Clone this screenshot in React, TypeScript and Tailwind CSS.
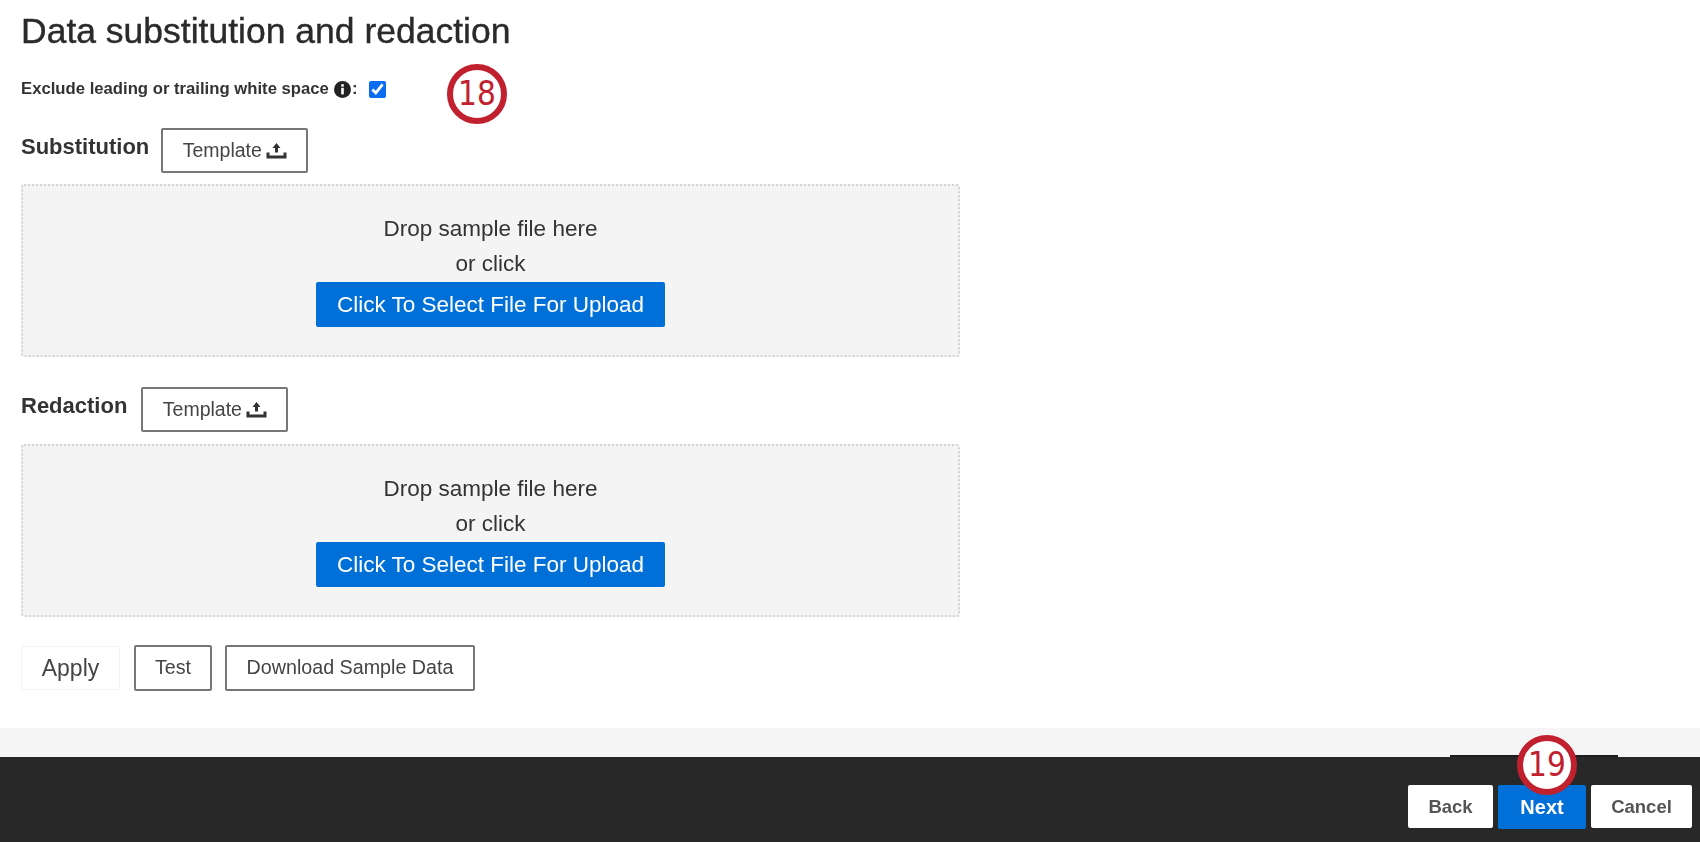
const sans = { fontFamily: '"Liberation Sans", Arial, sans-serif' };

function TrayIcon() {
  return (
    <svg width="21" height="18" viewBox="0 0 21 18" fill="none" className="ml-[4px]">
      <path d="M10.5 1 L14.5 6 H12 V10.5 H9 V6 H6.5 Z" fill="#333" />
      <path d="M2 10.5 V15 H19 V10.5" stroke="#333" strokeWidth="3" />
    </svg>
  );
}

function InfoIcon() {
  return (
    <svg width="17" height="17" viewBox="0 0 17 17" className="ml-[5px] mr-[1px] shrink-0">
      <circle cx="8.5" cy="8.5" r="8.5" fill="#222" />
      <rect x="7.2" y="3.2" width="2.6" height="2.4" fill="#fff" />
      <rect x="7.2" y="6.8" width="2.6" height="6.6" fill="#fff" />
    </svg>
  );
}

function OutlineButton({ className, children }: { className: string; children: React.ReactNode }) {
  return (
    <button className={`flex items-center justify-center rounded-[2px] border-2 border-[#777] bg-white text-[#444] ${className}`}>
      {children}
    </button>
  );
}

function DropZone() {
  return (
    <div className="flex h-[173px] w-[939px] flex-col items-center rounded-[3px] border-2 border-dotted border-[#d4d4d4] bg-[#f4f4f4] pt-[28px]">
      <p className="text-[22.5px] leading-[30px] text-[#333]">Drop sample file here</p>
      <p className="mt-[5px] text-[22.5px] leading-[30px] text-[#333]">or click</p>
      <button className="mt-[3px] h-[45px] w-[349px] rounded-[2px] bg-[#0070d9] text-[22.5px] text-white">
        Click To Select File For Upload
      </button>
    </div>
  );
}

function Badge({ n, className }: { n: number; className: string }) {
  return (
    <div
      className={`absolute flex h-[60px] w-[60px] items-center justify-center rounded-full border-[6px] border-[#c1202f] bg-white text-[33px] text-[#c1202f] ${className}`}
      style={{ fontFamily: '"DejaVu Sans Condensed", "DejaVu Sans", sans-serif' }}
    >
      {n}
    </div>
  );
}

export default function App() {
  return (
    <div className="relative flex h-[842px] w-[1700px] flex-col overflow-hidden bg-white" style={sans}>
      <div className="flex flex-1 flex-col blur-[0.6px]">
        <div className="flex-1 px-[21px] pt-[10px]">
          <h1 className="text-[35.5px] leading-[42px] text-[#2a2a2a] [-webkit-text-stroke:0.4px_#2a2a2a]">
            Data substitution and redaction
          </h1>

          <div className="mt-[25px] flex h-[24px] items-center text-[16.7px] font-bold text-[#333]">
            <span>Exclude leading or trailing white space</span>
            <InfoIcon />
            <span>:</span>
            <input type="checkbox" defaultChecked className="ml-[12px] h-[17px] w-[17px] accent-[#0a6cf0]" />
          </div>

          <div className="mt-[27px] flex items-start">
            <span className="mt-[7px] text-[22px] font-bold leading-[24px] text-[#333]">Substitution</span>
            <OutlineButton className="ml-[12px] h-[45px] w-[147px] text-[19.5px]">
              Template
              <TrayIcon />
            </OutlineButton>
          </div>
          <div className="mt-[11px]">
            <DropZone />
          </div>

          <div className="mt-[30px] flex items-start">
            <span className="mt-[7px] text-[22px] font-bold leading-[24px] text-[#333]">Redaction</span>
            <OutlineButton className="ml-[14px] h-[45px] w-[147px] text-[19.5px]">
              Template
              <TrayIcon />
            </OutlineButton>
          </div>
          <div className="mt-[12px]">
            <DropZone />
          </div>

          <div className="mt-[28px] flex items-center">
            <button className="h-[44px] w-[99px] rounded-[2px] border border-dotted border-[#e8e8e8] text-[23px] text-[#444]">
              Apply
            </button>
            <OutlineButton className="ml-[14px] h-[46px] w-[78px] text-[19.7px]">Test</OutlineButton>
            <OutlineButton className="ml-[13px] h-[46px] w-[250px] text-[19.7px]">Download Sample Data</OutlineButton>
          </div>
        </div>

        <div className="h-[29px] bg-[#f5f5f5]" />

        <div className="relative flex h-[85px] items-start justify-end gap-[5px] bg-[#282828] pr-[8px] pt-[28px]">
          <div className="absolute left-[1450px] top-[-2px] h-[2px] w-[168px] bg-[#1c1c1c]" />
          <button className="h-[43px] w-[85px] rounded-[2px] bg-white text-[18.5px] font-bold text-[#555]">Back</button>
          <button className="h-[44px] w-[88px] rounded-[2px] bg-[#0070d9] text-[20px] font-bold text-white">Next</button>
          <button className="h-[43px] w-[101px] rounded-[2px] bg-white text-[18.5px] font-bold text-[#555]">Cancel</button>
        </div>
      </div>

      <Badge n={18} className="left-[447px] top-[64px]" />
      <Badge n={19} className="left-[1517px] top-[735px]" />
    </div>
  );
}
